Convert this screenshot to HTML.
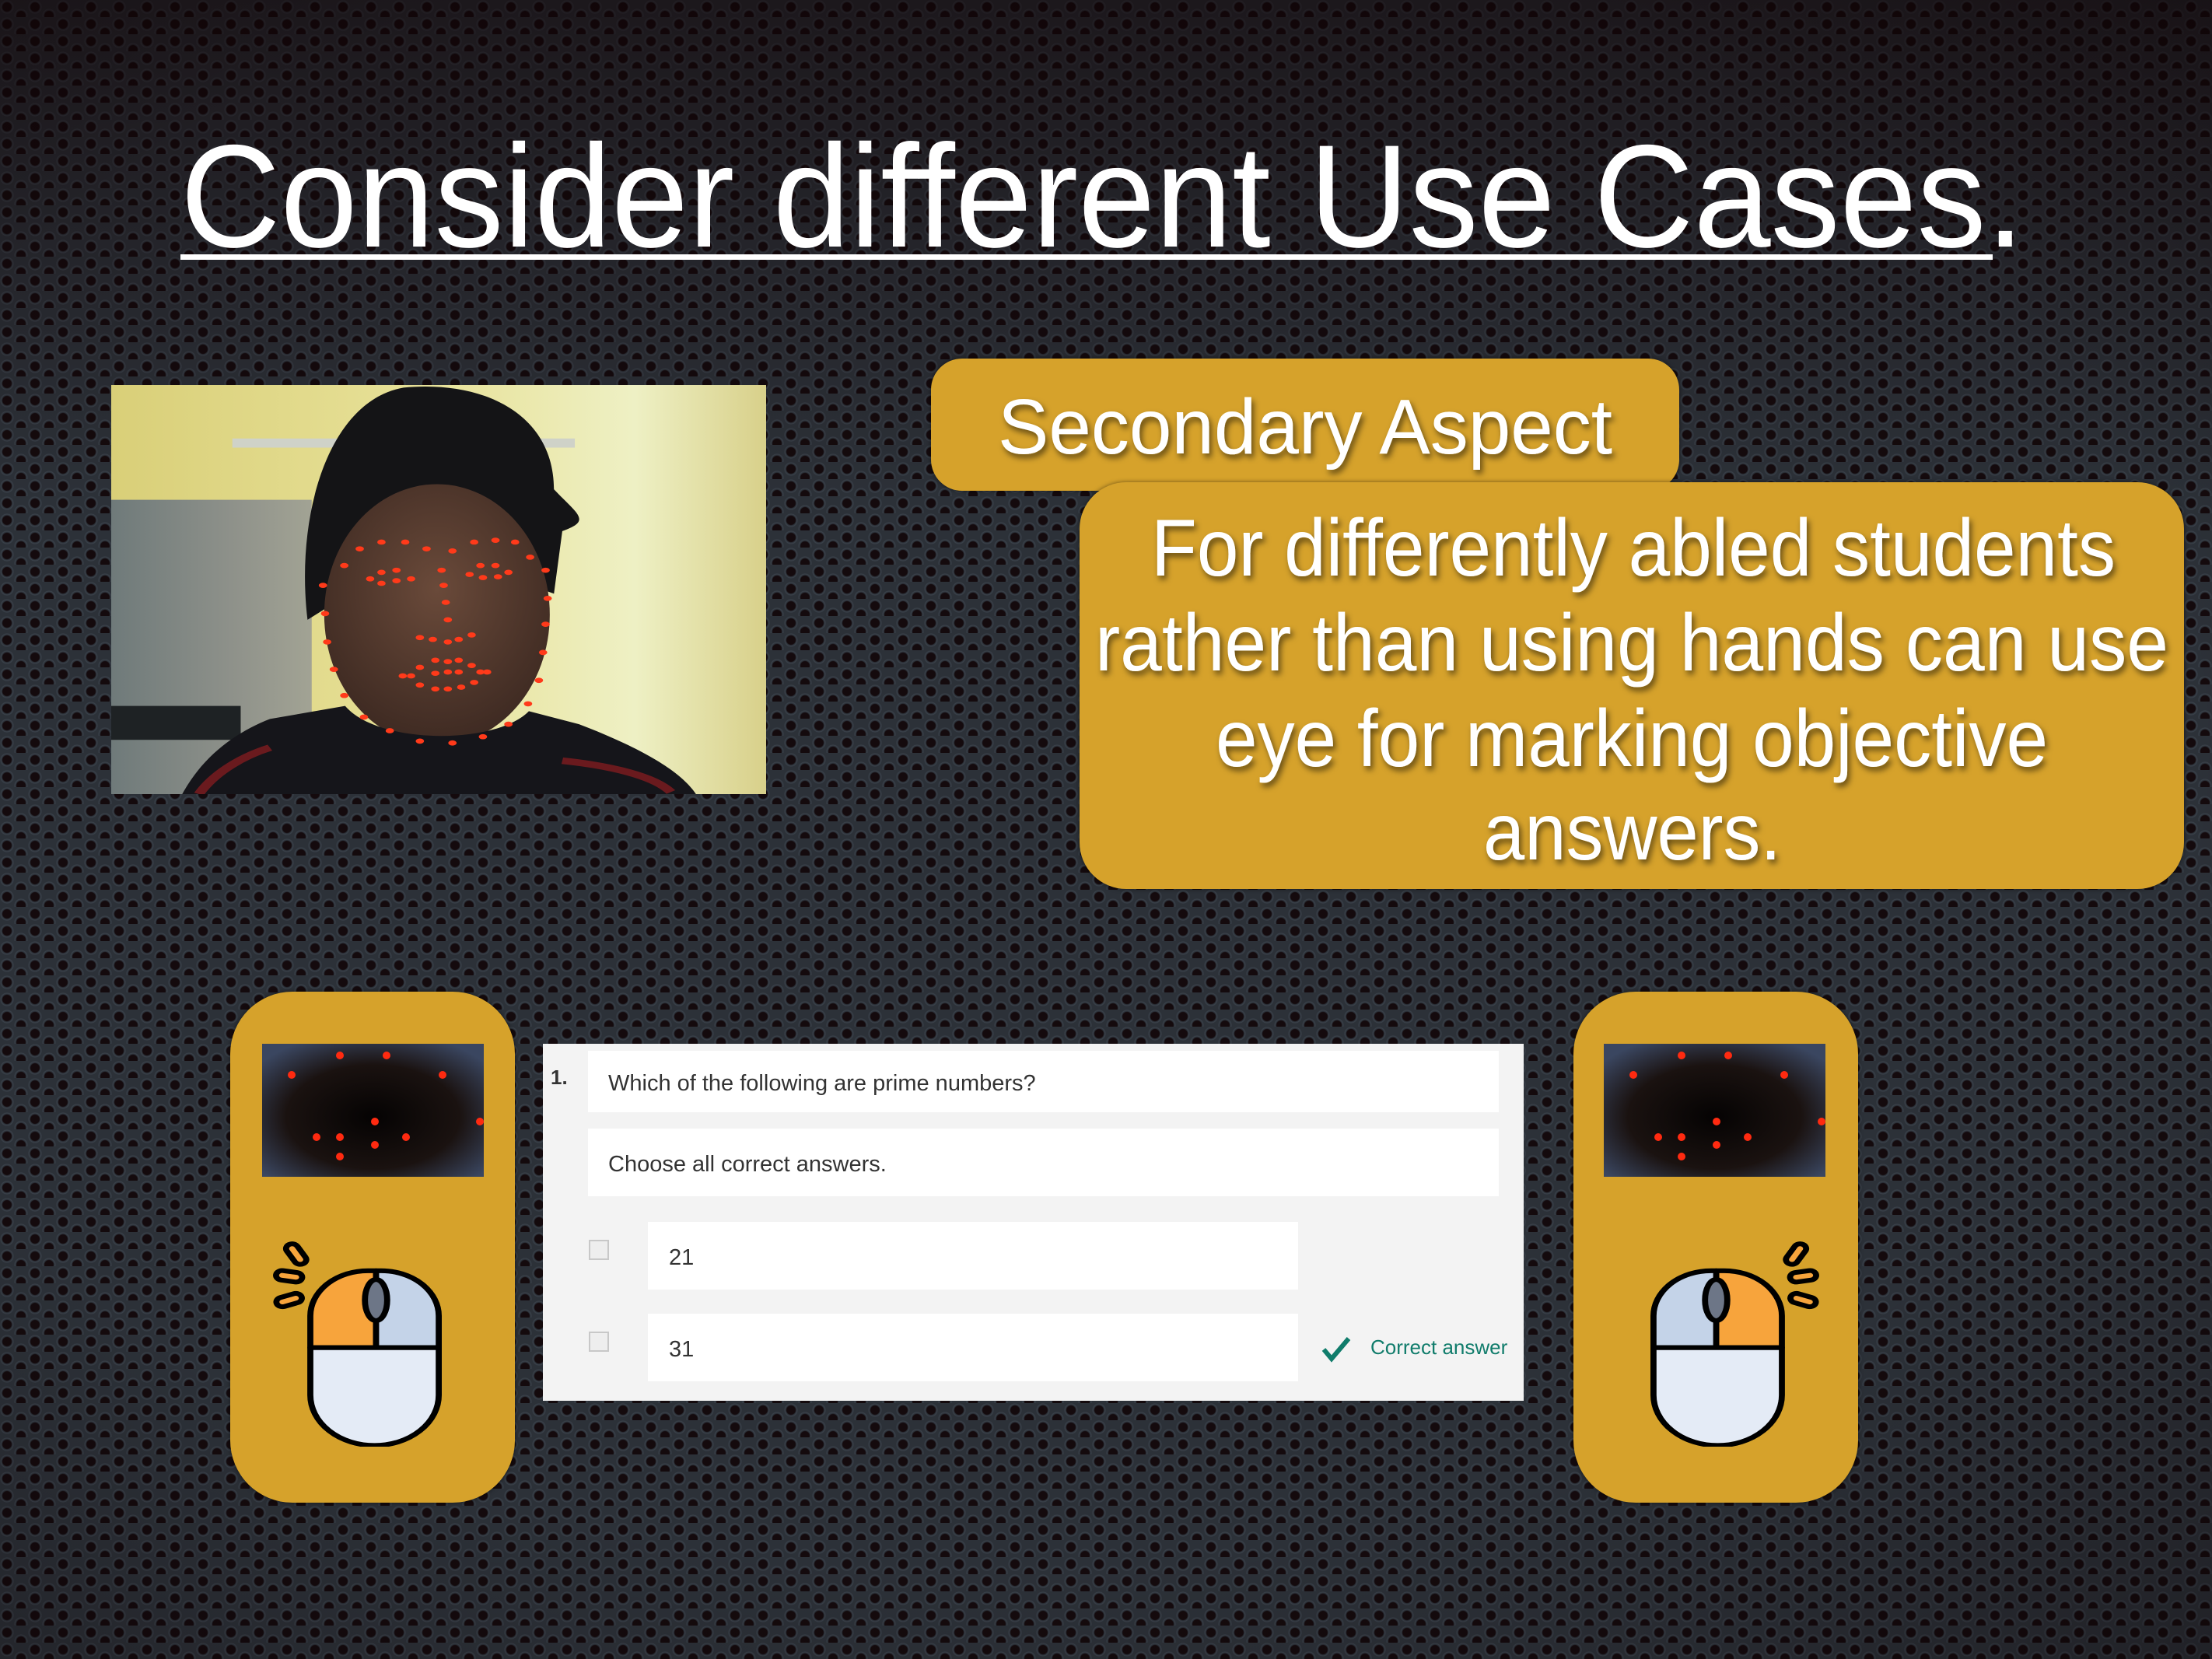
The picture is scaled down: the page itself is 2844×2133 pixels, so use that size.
<!DOCTYPE html>
<html><head><meta charset="utf-8"><style>
*{margin:0;padding:0;box-sizing:border-box}
body{width:2844px;height:2133px;overflow:hidden;position:relative;font-family:"Liberation Sans",sans-serif;
background:
linear-gradient(180deg, rgba(15,3,5,.55) 0%, rgba(0,0,0,0) 30%),
radial-gradient(ellipse 120% 110% at 45% 45%, rgba(0,0,0,0) 45%, rgba(10,2,4,.8) 100%),
radial-gradient(circle at 9px 9px,#140a0d 5.5px,#2a2f36 6.5px,#3b424b 8px,rgba(0,0,0,0) 9px) 0 0/36px 22px,
radial-gradient(circle at 27px 20px,#140a0d 5.5px,#2a2f36 6.5px,#3b424b 8px,rgba(0,0,0,0) 9px) 0 0/36px 22px,
#2c3138;}
.abs{position:absolute}
.gold{background:#d6a22b;box-shadow:0 0 6px rgba(0,0,0,.5)}
svg text{font-family:"Liberation Sans",sans-serif;fill:#fff}
.q{font-family:"Liberation Sans",sans-serif;color:#333;font-size:29px}
.wb{position:absolute;background:#fff}
</style></head><body>
<svg class="abs" style="left:0;top:0" width="2844" height="2133">
<defs><filter id="sh"><feDropShadow dx="3" dy="5" stdDeviation="4" flood-color="#000" flood-opacity=".55"/></filter></defs>
<text x="232" y="317" font-size="188" textLength="2371" lengthAdjust="spacingAndGlyphs">Consider different Use Cases.</text>
<rect x="232" y="327" width="2330" height="7" fill="#fff"/>
</svg>

<!-- photo -->
<svg class="abs" style="left:143px;top:495px" width="842" height="526" viewBox="0 0 1568 1568" preserveAspectRatio="none">
<defs>
<linearGradient id="wall" x1="0" x2="1"><stop offset="0" stop-color="#d9cf78"/><stop offset=".5" stop-color="#e8e29a"/><stop offset=".8" stop-color="#eef0c4"/><stop offset="1" stop-color="#d8d08a"/></linearGradient>
<linearGradient id="fr" x1="0" x2="1"><stop offset="0" stop-color="#6f7a7a"/><stop offset=".6" stop-color="#8e918a"/><stop offset="1" stop-color="#a2a394"/></linearGradient>
<radialGradient id="face" cx="50%" cy="40%" r="60%"><stop offset="0" stop-color="#6a4a3a"/><stop offset="1" stop-color="#3e2a22"/></radialGradient>
</defs>
<rect width="1568" height="1568" fill="url(#wall)"/>
<rect x="290" y="205" width="820" height="35" fill="#cfd2c8"/>
<rect x="0" y="440" width="480" height="1128" fill="url(#fr)"/>
<rect x="0" y="1230" width="310" height="130" fill="#1e2224"/>
<path d="M470 900 C440 500 520 60 700 10 C900 -20 1060 120 1060 400 C1120 500 1150 520 1080 560 L1060 800 C900 700 600 700 520 850 Z" fill="#141416"/>
<ellipse cx="780" cy="880" rx="270" ry="500" fill="url(#face)"/>
<path d="M170 1568 C220 1420 300 1330 380 1280 L560 1230 C640 1380 920 1380 1000 1250 L1120 1300 C1250 1380 1360 1470 1400 1568 Z" fill="#15151a"/>
<path d="M210 1568 C250 1480 320 1420 380 1390" stroke="#6a1a1e" stroke-width="25" fill="none"/>
<path d="M1080 1440 C1200 1460 1300 1500 1340 1560" stroke="#6a1a1e" stroke-width="25" fill="none"/>
<g fill="#ff3a1a">
<circle cx="595" cy="628" r="10"/><circle cx="647" cy="602" r="10"/><circle cx="704" cy="602" r="10"/><circle cx="755" cy="628" r="10"/><circle cx="817" cy="636" r="10"/><circle cx="869" cy="602" r="10"/><circle cx="920" cy="595" r="10"/><circle cx="967" cy="602" r="10"/><circle cx="1003" cy="660" r="10"/>
<circle cx="558" cy="692" r="10"/><circle cx="647" cy="718" r="10"/><circle cx="683" cy="710" r="10"/><circle cx="620" cy="743" r="10"/><circle cx="647" cy="760" r="10"/><circle cx="683" cy="750" r="10"/><circle cx="718" cy="743" r="10"/>
<circle cx="858" cy="726" r="10"/><circle cx="884" cy="692" r="10"/><circle cx="920" cy="692" r="10"/><circle cx="951" cy="718" r="10"/><circle cx="926" cy="735" r="10"/><circle cx="890" cy="738" r="10"/>
<circle cx="791" cy="710" r="10"/><circle cx="796" cy="768" r="10"/><circle cx="801" cy="833" r="10"/><circle cx="806" cy="900" r="10"/>
<circle cx="739" cy="968" r="10"/><circle cx="770" cy="975" r="10"/><circle cx="806" cy="985" r="10"/><circle cx="832" cy="975" r="10"/><circle cx="863" cy="958" r="10"/>
<circle cx="776" cy="1055" r="10"/><circle cx="806" cy="1060" r="10"/><circle cx="832" cy="1055" r="10"/><circle cx="863" cy="1075" r="10"/><circle cx="739" cy="1082" r="10"/><circle cx="698" cy="1115" r="10"/><circle cx="718" cy="1115" r="10"/><circle cx="776" cy="1105" r="10"/><circle cx="806" cy="1100" r="10"/><circle cx="832" cy="1100" r="10"/><circle cx="884" cy="1100" r="10"/><circle cx="900" cy="1100" r="10"/><circle cx="739" cy="1150" r="10"/><circle cx="776" cy="1165" r="10"/><circle cx="806" cy="1165" r="10"/><circle cx="838" cy="1158" r="10"/><circle cx="869" cy="1140" r="10"/>
<circle cx="507" cy="768" r="10"/><circle cx="512" cy="876" r="10"/><circle cx="517" cy="985" r="10"/><circle cx="533" cy="1090" r="10"/><circle cx="558" cy="1190" r="10"/><circle cx="605" cy="1273" r="10"/><circle cx="667" cy="1325" r="10"/><circle cx="739" cy="1365" r="10"/><circle cx="817" cy="1372" r="10"/><circle cx="890" cy="1348" r="10"/><circle cx="951" cy="1300" r="10"/><circle cx="998" cy="1222" r="10"/><circle cx="1024" cy="1132" r="10"/><circle cx="1034" cy="1025" r="10"/><circle cx="1040" cy="917" r="10"/><circle cx="1045" cy="818" r="10"/><circle cx="1040" cy="710" r="10"/>
</g>
</svg>

<!-- secondary aspect -->
<div class="abs gold" style="left:1197px;top:461px;width:962px;height:170px;border-radius:40px"></div>
<div class="abs gold" style="left:1388px;top:620px;width:1420px;height:523px;border-radius:60px"></div>
<svg class="abs" style="left:0;top:0" width="2844" height="2133" filter="url(#sh)">
<text x="1283" y="583" font-size="100" textLength="790" lengthAdjust="spacingAndGlyphs">Secondary Aspect</text>
<text x="1480" y="740" font-size="104" textLength="1240" lengthAdjust="spacingAndGlyphs">For differently abled students</text>
<text x="1408" y="862" font-size="104" textLength="1380" lengthAdjust="spacingAndGlyphs">rather than using hands can use</text>
<text x="1563" y="985" font-size="104" textLength="1070" lengthAdjust="spacingAndGlyphs">eye for marking objective</text>
<text x="1907" y="1105" font-size="104" textLength="383" lengthAdjust="spacingAndGlyphs">answers.</text>
</svg>

<!-- cards -->
<div class="abs gold" style="left:296px;top:1275px;width:366px;height:657px;border-radius:80px"></div>
<div class="abs gold" style="left:2023px;top:1275px;width:366px;height:657px;border-radius:80px"></div>

<svg class="abs" style="left:337px;top:1342px" width="285" height="171">
<defs><radialGradient id="eg" cx="50%" cy="55%" r="65%"><stop offset="0" stop-color="#050303"/><stop offset=".6" stop-color="#1a1210"/><stop offset="1" stop-color="#3a4660"/></radialGradient></defs>
<rect width="285" height="171" fill="url(#eg)"/>
<g fill="#ff2a10"><circle cx="38" cy="40" r="5"/><circle cx="100" cy="15" r="5"/><circle cx="160" cy="15" r="5"/><circle cx="232" cy="40" r="5"/><circle cx="100" cy="120" r="5"/><circle cx="145" cy="100" r="5"/><circle cx="70" cy="120" r="5"/><circle cx="145" cy="130" r="5"/><circle cx="185" cy="120" r="5"/><circle cx="100" cy="145" r="5"/><circle cx="280" cy="100" r="5"/></g>
</svg>
<svg class="abs" style="left:2062px;top:1342px" width="285" height="171">
<rect width="285" height="171" fill="url(#eg)"/>
<g fill="#ff2a10"><circle cx="38" cy="40" r="5"/><circle cx="100" cy="15" r="5"/><circle cx="160" cy="15" r="5"/><circle cx="232" cy="40" r="5"/><circle cx="100" cy="120" r="5"/><circle cx="145" cy="100" r="5"/><circle cx="70" cy="120" r="5"/><circle cx="145" cy="130" r="5"/><circle cx="185" cy="120" r="5"/><circle cx="100" cy="145" r="5"/><circle cx="280" cy="100" r="5"/></g>
</svg>

<!-- mouse left -->
<svg class="abs" style="left:347px;top:1590px" width="273" height="270" viewBox="0 0 210 265" preserveAspectRatio="none">
<g stroke="#000" stroke-width="6" stroke-linejoin="round">
<path d="M40 140 V100 A57 57 0 0 1 97 43 H105 V140 Z" fill="#f7a43c"/>
<path d="M105 43 H110 A57 57 0 0 1 167 100 V140 H105 Z" fill="#c4d3e8"/>
<path d="M40 140 H167 V200 A63 63 0 0 1 40 200 Z" fill="#e4ebf6"/>
<ellipse cx="105" cy="80" rx="11" ry="26" fill="#6d7687"/>
<rect x="20" y="8" width="12" height="28" rx="6" transform="rotate(-30 26 22)" fill="#f7a43c"/>
<rect x="6" y="44" width="26" height="12" rx="6" fill="#f7a43c" transform="rotate(10 19 50)"/>
<rect x="6" y="74" width="26" height="12" rx="6" fill="#f7a43c" transform="rotate(-20 19 80)"/>
</g></svg>
<!-- mouse right (mirrored) -->
<svg class="abs" style="left:2070px;top:1590px;transform:scaleX(-1)" width="273" height="270" viewBox="0 0 210 265" preserveAspectRatio="none">
<g stroke="#000" stroke-width="6" stroke-linejoin="round">
<path d="M40 140 V100 A57 57 0 0 1 97 43 H105 V140 Z" fill="#f7a43c"/>
<path d="M105 43 H110 A57 57 0 0 1 167 100 V140 H105 Z" fill="#c4d3e8"/>
<path d="M40 140 H167 V200 A63 63 0 0 1 40 200 Z" fill="#e4ebf6"/>
<ellipse cx="105" cy="80" rx="11" ry="26" fill="#6d7687"/>
<rect x="20" y="8" width="12" height="28" rx="6" transform="rotate(-30 26 22)" fill="#f7a43c"/>
<rect x="6" y="44" width="26" height="12" rx="6" fill="#f7a43c" transform="rotate(10 19 50)"/>
<rect x="6" y="74" width="26" height="12" rx="6" fill="#f7a43c" transform="rotate(-20 19 80)"/>
</g></svg>

<!-- quiz -->
<div class="abs" style="left:698px;top:1342px;width:1261px;height:459px;background:#f3f3f3">
 <div class="q abs" style="left:10px;top:28px;font-weight:bold;font-size:26px">1.</div>
 <div class="wb" style="left:58px;top:9px;width:1171px;height:79px"><div class="q" style="padding:26px 0 0 26px">Which of the following are prime numbers?</div></div>
 <div class="wb" style="left:58px;top:109px;width:1171px;height:87px"><div class="q" style="padding:30px 0 0 26px">Choose all correct answers.</div></div>
 <div class="abs" style="left:59px;top:252px;width:26px;height:26px;border:2px solid #c8c8c8;background:#eee"></div>
 <div class="wb" style="left:135px;top:229px;width:836px;height:87px"><div class="q" style="padding:30px 0 0 27px">21</div></div>
 <div class="abs" style="left:59px;top:370px;width:26px;height:26px;border:2px solid #c8c8c8;background:#eee"></div>
 <div class="wb" style="left:135px;top:347px;width:836px;height:87px"><div class="q" style="padding:30px 0 0 27px">31</div></div>
 <svg class="abs" style="left:1000px;top:375px" width="40" height="36"><path d="M4 18 L14 30 L36 4" stroke="#107c6b" stroke-width="6" fill="none"/></svg>
 <div class="abs" style="left:1064px;top:375px;color:#107c6b;font-size:26px">Correct answer</div>
</div>
</body></html>
